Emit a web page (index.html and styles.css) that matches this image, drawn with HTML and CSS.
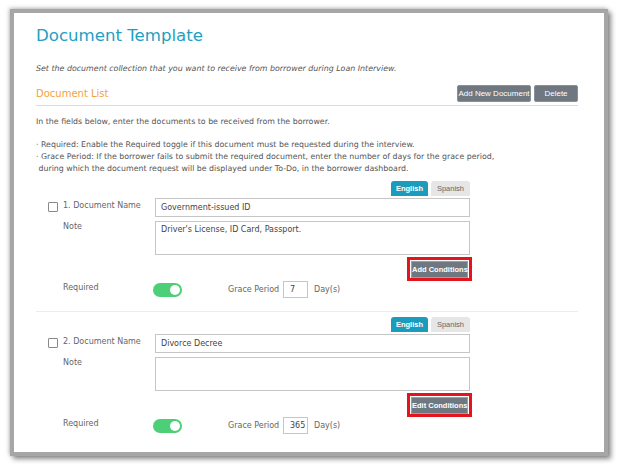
FILE: index.html
```html
<!DOCTYPE html>
<html>
<head>
<meta charset="utf-8">
<link rel="stylesheet" href="styles.css">
</head>
<body>
<div class="frame">
  <h1 class="title">Document Template</h1>
  <p class="subtitle">Set the document collection that you want to receive from borrower during Loan Interview.</p>
  <div class="list-head">
    <h2 class="list-title">Document List</h2>
    <div class="head-actions">
      <button class="btn">Add New Document</button>
      <button class="btn btn-del">Delete</button>
    </div>
  </div>
  <p class="intro">In the fields below, enter the documents to be received from the borrower.</p>
  <ul class="notes">
    <li>· Required: Enable the Required toggle if this document must be requested during the interview.</li>
    <li>· Grace Period: If the borrower fails to submit the required document, enter the number of days for the grace period,<br>&nbsp;during which the document request will be displayed under To-Do, in the borrower dashboard.</li>
  </ul>

  <div class="doc">
    <div class="tabs"><span class="tab active">English</span><span class="tab">Spanish</span></div>
    <div class="row">
      <span class="cb"></span><label class="lbl">1. Document Name</label>
      <div class="field input">Government-issued ID</div>
    </div>
    <div class="row row-note">
      <span class="cb-space"></span><label class="lbl">Note</label>
      <div class="field textarea">Driver's License, ID Card, Passport.</div>
    </div>
    <div class="cond-row"><span class="hl"><button class="btn btn-cond">Add Conditions</button></span></div>
    <div class="req-row">
      <span class="cb-space"></span><label class="lbl req-lbl">Required</label>
      <span class="toggle"><span class="knob"></span></span>
      <span class="grace-lbl">Grace Period</span>
      <span class="days">7</span>
      <span class="unit">Day(s)</span>
    </div>
  </div>

  <div class="doc doc-2">
    <div class="tabs"><span class="tab active">English</span><span class="tab">Spanish</span></div>
    <div class="row">
      <span class="cb"></span><label class="lbl">2. Document Name</label>
      <div class="field input">Divorce Decree</div>
    </div>
    <div class="row row-note">
      <span class="cb-space"></span><label class="lbl">Note</label>
      <div class="field textarea"></div>
    </div>
    <div class="cond-row"><span class="hl"><button class="btn btn-cond">Edit Conditions</button></span></div>
    <div class="req-row">
      <span class="cb-space"></span><label class="lbl req-lbl">Required</label>
      <span class="toggle"><span class="knob"></span></span>
      <span class="grace-lbl">Grace Period</span>
      <span class="days">365</span>
      <span class="unit">Day(s)</span>
    </div>
  </div>
</div>
</body>
</html>
```

FILE: styles.css
```css
* { box-sizing: border-box; }
html, body { margin: 0; padding: 0; background: #fff; }
body {
  font-family: "DejaVu Sans", Verdana, sans-serif;
  color: #555;
  width: 619px;
  height: 465px;
  overflow: hidden;
}
.frame {
  margin: 9px 0 0 10px;
  width: 598px;
  height: 447px;
  border: 4px solid #a6a6a6;
  box-shadow: 3px 3px 5px rgba(0,0,0,0.45), -1px -1px 4px rgba(0,0,0,0.25);
  padding: 13px 26px 0 22px;
  overflow: hidden;
}
.title {
  margin: 0;
  font-weight: normal;
  font-size: 16.6px;
  line-height: 20px;
  color: #1ea0c3;
}
.subtitle {
  margin: 17px 0 0;
  font-size: 7.9px;
  line-height: 12px;
  font-style: italic;
  color: #555;
}
.list-head {
  margin-top: 10px;
  display: flex;
  align-items: center;
  justify-content: space-between;
  padding-bottom: 3px;
  border-bottom: 1px solid #dcdcdc;
}
.list-title {
  margin: 0;
  font-weight: normal;
  font-size: 10px;
  line-height: 17px;
  color: #f2a33a;
}
.head-actions { display: flex; gap: 3px; }
.btn {
  font-family: "Liberation Sans", Arial, sans-serif;
  font-size: 8px;
  color: #fff;
  background: #6f7780;
  border: 1px solid #8a9098;
  border-radius: 2px;
  height: 17px;
  padding: 0;
  margin: 0;
  line-height: 15px;
  white-space: nowrap;
  text-align: center;
}
.head-actions .btn { width: 74px; }
.head-actions .btn-del { width: 44px; }
.intro {
  margin: 10px 0 0;
  font-size: 7.85px;
  line-height: 12px;
}
.notes {
  list-style: none;
  margin: 11px 0 0;
  padding: 0;
  font-size: 7.85px;
  line-height: 12px;
}
.doc {
  margin-top: 6px;
  padding: 0 0 13px 12px;
  border-bottom: 1px solid #ececec;
}
.doc-2 { margin-top: 0; padding-top: 5px; border-bottom: none; }
.tabs {
  display: flex;
  justify-content: flex-end;
  gap: 3px;
  width: 422px;
  height: 15px;
}
.tab {
  font-family: "Liberation Sans", Arial, sans-serif;
  font-size: 7.5px;
  width: 39px;
  text-align: center;
  line-height: 15px;
  background: #e6e6e6;
  color: #666;
  border-radius: 3px 3px 0 0;
}
.tab.active {
  width: 37px;
  background: #1c9cbc;
  color: #fff;
  font-weight: bold;
}
.row { display: flex; align-items: flex-start; margin-top: 2px; }
.row-note { margin-top: 4px; }
.cb {
  width: 10px;
  height: 10px;
  margin: 4px 5px 0 0;
  border: 1px solid #888;
  border-radius: 1px;
  flex: none;
}
.cb-space { width: 15px; flex: none; }
.lbl {
  width: 92px;
  flex: none;
  font-size: 8px;
  line-height: 12px;
  padding-top: 2px;
  color: #666;
}
.row-note .lbl { padding-top: 0; }
.field {
  width: 315px;
  border: 1px solid #c6c6c6;
  font-size: 8px;
  color: #444;
  padding: 0 5px;
}
.input { height: 19px; line-height: 17px; }
.textarea { height: 34px; line-height: 12px; padding-top: 2px; }
.cond-row {
  display: flex;
  justify-content: flex-end;
  width: 424px;
  margin-top: 2px;
  height: 24px;
}
.hl {
  display: flex;
  align-items: center;
  justify-content: center;
  border: 3px solid #e3141c;
  width: 65px;
  height: 24px;
}
.btn-cond {
  width: 57px;
  height: 17px;
  border-radius: 0;
  border-color: #9aa0a6;
  font-weight: bold;
  font-size: 7.5px;
}
.req-row {
  display: flex;
  align-items: center;
  height: 17px;
}
.req-lbl { width: 90px; padding: 0; margin-top: -3px; }
.toggle {
  position: relative;
  width: 29px;
  height: 14px;
  border-radius: 7px;
  background: #4ccf77;
  flex: none;
}
.knob {
  position: absolute;
  right: 2px;
  top: 2px;
  width: 10px;
  height: 10px;
  border-radius: 50%;
  background: #fff;
}
.grace-lbl {
  width: 55px;
  margin-left: 46px;
  font-size: 8px;
  color: #666;
}
.days {
  width: 25px;
  height: 17px;
  border: 1px solid #c6c6c6;
  font-size: 8px;
  line-height: 15px;
  padding-left: 6px;
  color: #444;
}
.unit { margin-left: 6px; font-size: 8px; color: #666; }
```
